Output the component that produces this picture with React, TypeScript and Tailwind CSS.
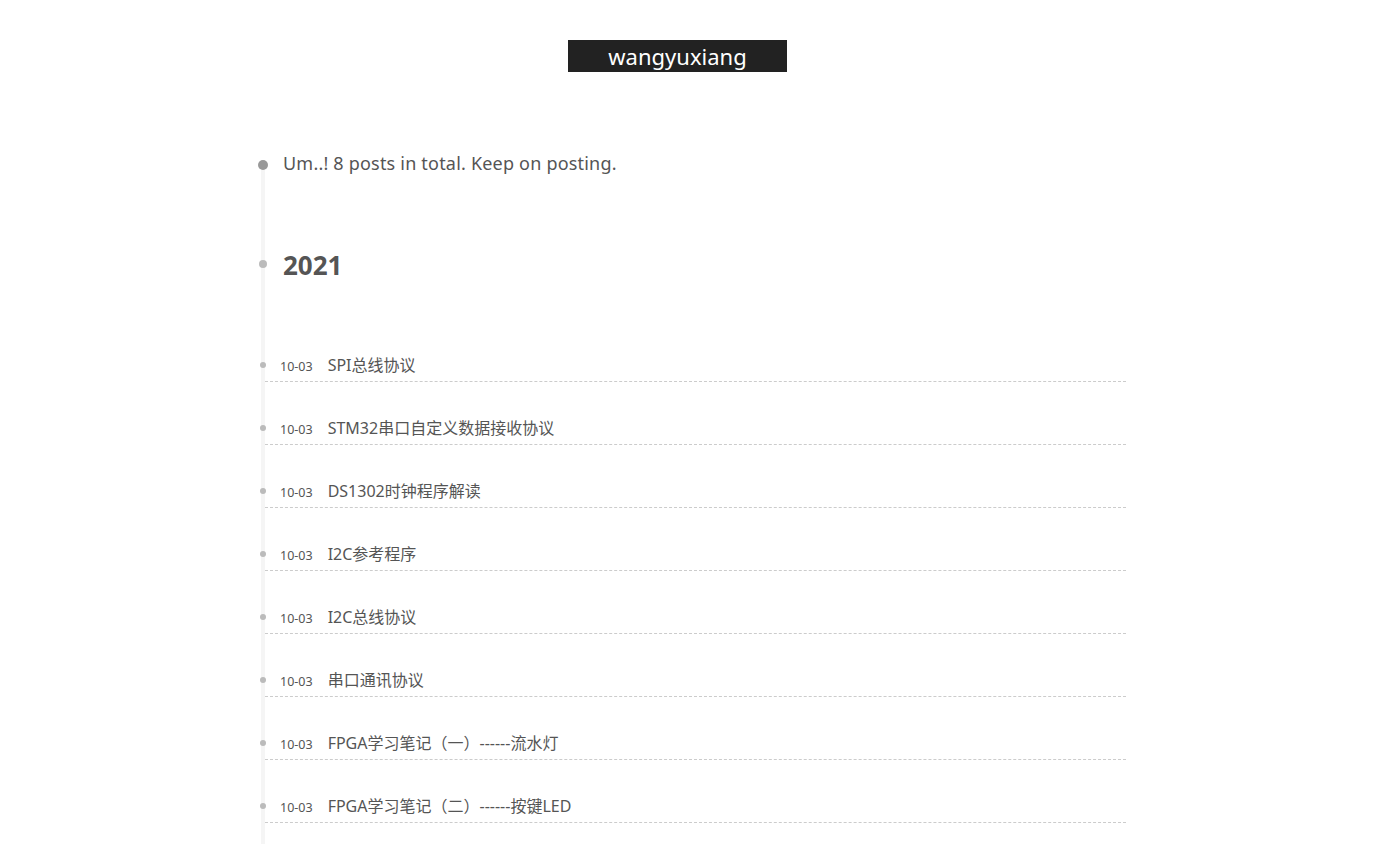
const POSTS = [
  { date: "10-03", title: "SPI总线协议" },
  { date: "10-03", title: "STM32串口自定义数据接收协议" },
  { date: "10-03", title: "DS1302时钟程序解读" },
  { date: "10-03", title: "I2C参考程序" },
  { date: "10-03", title: "I2C总线协议" },
  { date: "10-03", title: "串口通讯协议" },
  { date: "10-03", title: "FPGA学习笔记（一）------流水灯" },
  { date: "10-03", title: "FPGA学习笔记（二）------按键LED" },
]

export default function App() {
  return (
    <div className="min-h-screen bg-white text-[#555] font-['Noto_Sans','Noto_Sans_CJK_SC',sans-serif]">
      {/* Header */}
      <header className="flex justify-center pt-[40px] pr-[30px]">
        <div className="flex h-[32px] w-[219px] items-center justify-center bg-[#222] text-[22px] leading-none text-white">
          wangyuxiang
        </div>
      </header>

      {/* Archive timeline */}
      <main className="ml-[261px] mt-[93px] flex w-[865px] flex-col border-l-4 border-[#f5f5f5] pb-[40px]">
        <div className="-mt-[16px] -ml-[7px] flex items-start text-[18px] leading-[28px]">
          <span className="mt-[11px] h-[10px] w-[10px] shrink-0 rounded-full bg-[#999]" />
          <span className="ml-[15px] tracking-[0.2px]">Um..! 8 posts in total. Keep on posting.</span>
        </div>

        <div className="mt-[70px] -ml-[6px] flex items-start text-[26px] font-bold leading-[36px]">
          <span className="mt-[13px] h-[8px] w-[8px] shrink-0 rounded-full bg-[#bbb]" />
          <span className="ml-[16px]">2021</span>
        </div>

        <ul className="mt-[70px] flex flex-col gap-[34px]">
          {POSTS.map((p) => (
            <li
              key={p.title}
              className="flex h-[29px] items-baseline border-b border-dashed border-[#ccc] pb-[4px]"
            >
              <span className="-ml-[5px] mt-[9px] h-[6px] w-[6px] shrink-0 self-start rounded-full bg-[#bbb]" />
              <span className="ml-[14px] mr-[15px] text-[12.5px] leading-[24px] text-[#555]">{p.date}</span>
              <span className="text-[16px] leading-[24px]">{p.title}</span>
            </li>
          ))}
        </ul>
      </main>
    </div>
  )
}
